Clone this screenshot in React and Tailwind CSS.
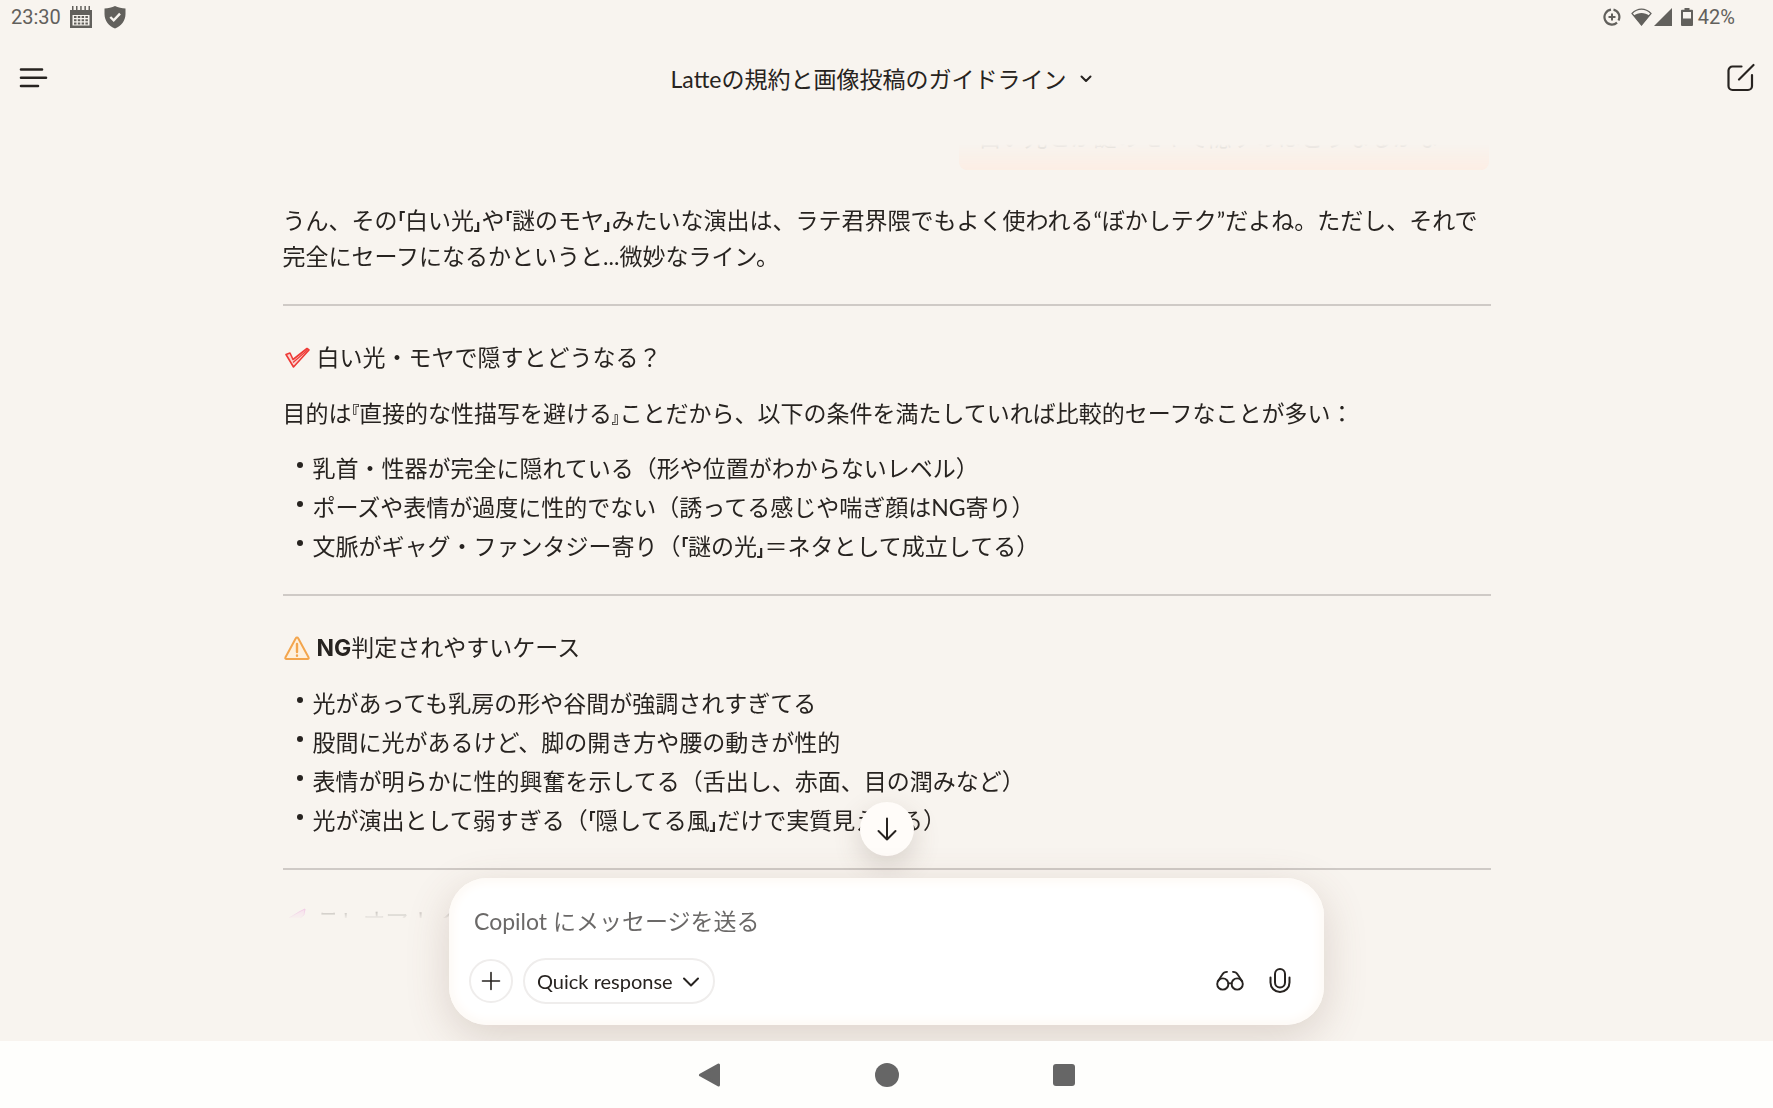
const lightCases = [
  <>乳首・性器が完全に隠れている（形や位置がわからないレベル）</>,
  <>ポーズや表情が過度に性的でない（誘ってる感じや喘ぎ顔はNG寄り）</>,
  <>文脈がギャグ・ファンタジー寄り（<Open>「</Open>謎の光<Close>」</Close>＝ネタとして成立してる）</>,
]

const ngCases = [
  <>光があっても乳房の形や谷間が強調されすぎてる</>,
  <>股間に光があるけど、脚の開き方や腰の動きが性的</>,
  <>表情が明らかに性的興奮を示してる（舌出し、赤面、目の潤みなど）</>,
  <>光が演出として弱すぎる（<Open>「</Open>隠してる風<Close>」</Close>だけで実質見えてる）</>,
]

// Small proportional quote marks that hug the quoted text
function Open({ children }) {
  return <span className="align-[5px] text-[15px] leading-none font-black [font-feature-settings:'palt']">{children}</span>
}

function Close({ children }) {
  return <span className="align-[-1px] text-[15px] leading-none font-black [font-feature-settings:'palt']">{children}</span>
}

function StatusBar() {
  return (
    <div className="flex h-[34px] shrink-0 items-center justify-between pl-[11px] pr-[38px] font-[Roboto,sans-serif] text-[20px] leading-none text-[#62605c]">
      <div className="flex items-center">
        <span>23:30</span>
        <svg className="ml-[9px] h-[22px] w-[22px]" viewBox="0 0 22 22" fill="currentColor">
          <path fillRule="evenodd" d="M0 4h22v18H0zM2.500 9v10.500h17V9z" />
          <path d="M2 0h1.500v4H2zM6 0h1.500v4H6zM10.200 0h1.500v4h-1.500zM14.400 0h1.500v4h-1.500zM18.500 0H20v4h-1.500z" />
          <path d="M4 10h2.500v2H4zM7.800 10h2.500v2H7.800zM11.600 10h2.500v2h-2.500zM15.400 10h2.500v2h-2.500zM4 13.200h2.500v2H4zM7.800 13.200h2.500v2H7.800zM11.600 13.200h2.500v2h-2.500zM15.400 13.200h2.500v2h-2.500zM4 16.400h2.500v2H4zM7.800 16.400h2.500v2H7.800zM11.600 16.400h2.500v2h-2.500zM15.400 16.400h2.500v2h-2.500z" />
        </svg>
        <svg className="ml-3 h-6 w-[22px]" viewBox="0 0 22 24">
          <path fill="currentColor" d="M11 1C8 2.500 4 3.300.5 3.500V9c0 7 4.500 12 10.500 14.500C17 21 21.500 16 21.500 9V3.500C18 3.300 14 2.500 11 1z" />
          <path d="M6.300 12l3.400 3.300 6.300-6.600" fill="none" stroke="#f8f4ef" strokeWidth="2.400" />
        </svg>
      </div>
      <div className="flex items-center">
        <svg className="h-[18px] w-[18px]" viewBox="0 0 18 18" fill="none" stroke="currentColor">
          <path d="M8 1.600A7.500 7.500 0 1 0 14 14.600M10.500 1.600a7.500 7.500 0 0 1 5 10.800" strokeWidth="2.200" />
          <path d="M9 5.500v7M5.500 9h7" strokeWidth="2" />
        </svg>
        <svg className="ml-2.5 h-[18px] w-[21px]" viewBox="0 0 21 18">
          <path fill="none" stroke="currentColor" strokeWidth="1.200" d="M1 5.500C6.500-.3 14.500-.3 20 5.500L10.500 17z" />
          <path fill="currentColor" d="M2.800 7.500C7 4 14 4 18.200 7.500L10.500 17.500z" />
        </svg>
        <svg className="ml-0.5 h-[18px] w-[18px]" viewBox="0 0 18 18" fill="currentColor">
          <path d="M18 0v18H0z" />
        </svg>
        <svg className="ml-[9px] h-[18px] w-3" viewBox="0 0 12 18" fill="currentColor">
          <path fillRule="evenodd" d="M3.500 0h5v1.800H11q1 0 1 1V17q0 1-1 1H1q-1 0-1-1V2.800q0-1 1-1h2.500zM2 4v6.500h8V4z" />
        </svg>
        <span className="ml-[5px]">42%</span>
      </div>
    </div>
  )
}

function Header() {
  return (
    <header className="grid h-[90px] shrink-0 grid-cols-[1fr_auto_1fr] items-center px-4">
      <button aria-label="メニュー" className="flex h-10 w-8 items-center justify-self-start pb-0.5">
        <svg className="h-6 w-8" viewBox="0 0 32 24" fill="none" stroke="currentColor" strokeWidth="2.600" strokeLinecap="round">
          <path d="M5 3.500h21M5 11.700h25M5 20h17" />
        </svg>
      </button>
      <button className="flex items-center gap-2 pr-1 text-[23px] leading-9">
        Latteの規約と画像投稿のガイドライン
        <svg className="h-6 w-6" viewBox="0 0 24 24" fill="none" stroke="currentColor" strokeWidth="2" strokeLinecap="round" strokeLinejoin="round">
          <path d="M7.500 9.500L12 14l4.500-4.500" />
        </svg>
      </button>
      <button aria-label="新しいチャット" className="flex h-10 w-8 items-center justify-self-end pb-0.5">
        <svg className="h-8 w-8" viewBox="0 0 32 32" fill="none" stroke="currentColor" strokeWidth="2.200" strokeLinecap="round">
          <path d="M16.500 4.500H7.500a4 4 0 0 0-4 4v15.500a4 4 0 0 0 4 4H23a4 4 0 0 0 4-4V13" />
          <path d="M14 17.500L28.500 3" />
        </svg>
      </button>
    </header>
  )
}

function BulletList({ items }) {
  return (
    <ul className="mt-[19px] flex flex-col gap-[3px]">
      {items.map((item, i) => (
        <li key={i} className="flex gap-2.5 pl-3.5">
          <span className="mt-[12px] h-[6px] w-[6px] shrink-0 rounded-full bg-[#272320]" />
          <span>{item}</span>
        </li>
      ))}
    </ul>
  )
}

function Divider() {
  return <hr className="mt-[30px] border-t-2 border-[#cfcac6]" />
}

function Conversation() {
  return (
    <main className="mt-5 min-h-0 flex-1 overflow-hidden px-6 [mask-image:linear-gradient(to_bottom,transparent,rgba(0,0,0,0.7)_22px,black_40px,black_calc(100%-34px),rgba(0,0,0,0.04))]">
      <div className="mx-auto max-w-[1208px] text-[23px] leading-9">
        <div className="mr-0.5 ml-auto flex h-[26px] max-w-[530px] items-end overflow-hidden rounded-b-lg bg-[#fdece2] px-5 pb-[15px] whitespace-nowrap">
          <p className="text-[#6f6a66]">白い光とか謎のモヤで隠すのはどうなるかな</p>
        </div>

        <p className="mt-8">
          うん、その<Open>「</Open>白い光<Close>」</Close>や<Open>「</Open>謎のモヤ<Close>」</Close>みたいな演出は、ラテ君界隈でもよく使われる“ぼかしテク”だよね。ただし、それで完全にセーフになるかというと...微妙なライン。
        </p>
        <Divider />

        <h2 className="mt-[33px] flex items-center gap-1.5">
          <svg className="h-7 w-7" viewBox="0 0 28 28" fill="#fbd3d0" stroke="#ee3a36" strokeWidth="1.600" strokeLinejoin="round">
            <path d="M3 11.500l4-1.500 3 6.500L24 5.500l2 1.500L10.500 24z" />
            <path d="M10 19.500L24.500 7" strokeWidth="1.200" />
          </svg>
          白い光・モヤで隠すとどうなる？
        </h2>
        <p className="mt-5">
          目的は<Open>『</Open>直接的な性描写を避ける<Close>』</Close>ことだから、以下の条件を満たしていれば比較的セーフなことが多い：
        </p>
        <BulletList items={lightCases} />
        <Divider />

        <h2 className="mt-[33px] flex items-center gap-1.5">
          <svg className="h-7 w-7" viewBox="0 0 28 28" fill="#fef0dd" stroke="#f3a54d" strokeWidth="2" strokeLinejoin="round" strokeLinecap="round">
            <path d="M14 3.500q.8 0 1.200.8l10.300 19q.7 1.700-1 1.700h-21q-1.700 0-1-1.700l10.300-19q.4-.8 1.200-.8z" />
            <path d="M14 10v8M14 21.500v.2" strokeWidth="2.400" />
          </svg>
          <span><strong className="font-[Inter,sans-serif]">NG</strong>判定されやすいケース</span>
        </h2>
        <BulletList items={ngCases} />
        <Divider />

        <h2 className="mt-[33px] flex items-center gap-1.5">
          <svg className="h-7 w-7" viewBox="0 0 28 28" fill="#f6b4ea" stroke="#e060cc" strokeLinejoin="round">
            <path d="M22 2l-1 6-10 8-7 5 2-10 10-6z" />
          </svg>
          テレオマナイント
        </h2>
      </div>
    </main>
  )
}

function Composer() {
  return (
    <div className="relative -mt-10 shrink-0 px-6 pb-4">
      <button
        aria-label="一番下へ"
        className="absolute -top-[76px] left-1/2 flex h-[54px] w-[54px] -translate-x-1/2 items-center justify-center rounded-full bg-[#fffcf9] shadow-[0_10px_28px_rgba(90,70,60,0.2)]"
      >
        <svg className="h-7 w-7" viewBox="0 0 28 28" fill="none" stroke="currentColor" strokeWidth="2" strokeLinecap="round" strokeLinejoin="round">
          <path d="M14 3.500v21M5.500 16l8.500 8.500 8.500-8.500" />
        </svg>
      </button>
      <form
        onSubmit={(e) => e.preventDefault()}
        className="relative mx-auto max-w-[875px] rounded-[38px] bg-white pt-[25px] pr-6 pb-[21px] pl-5 shadow-[0_12px_44px_rgba(110,75,60,0.2),inset_0_0_10px_5px_#fefaf6]"
      >
        <input
          type="text"
          aria-label="メッセージ"
          placeholder="Copilot にメッセージを送る"
          className="block h-9 w-full bg-transparent px-[5px] text-[23px] leading-9 outline-none placeholder:text-[#6b6968]"
        />
        <div className="mt-[19px] flex items-center">
          <button type="button" aria-label="追加" className="flex h-11 w-11 items-center justify-center rounded-full border-2 border-[#efedec]">
            <svg className="h-5 w-5" viewBox="0 0 20 20" fill="none" stroke="currentColor" strokeWidth="1.600" strokeLinecap="round">
              <path d="M10 1.500v17M1.500 10h17" />
            </svg>
          </button>
          <button type="button" className="ml-2.5 flex h-[46px] items-center gap-2 rounded-full border-2 border-[#efedec] px-3 text-[20px]">
            Quick response
            <svg className="h-5 w-5" viewBox="0 0 20 20" fill="none" stroke="currentColor" strokeWidth="2" strokeLinecap="round" strokeLinejoin="round">
              <path d="M3 7.500l7 7 7-7" />
            </svg>
          </button>
          <div className="ml-auto flex gap-2.5">
            <button type="button" aria-label="Vision" className="flex h-10 w-10 items-center justify-center">
              <svg className="h-7 w-7" viewBox="0 0 28 28" fill="none" stroke="currentColor" strokeWidth="1.900" strokeLinecap="round">
                <circle cx="6.800" cy="17" r="5.600" />
                <circle cx="21.200" cy="17" r="5.600" />
                <path d="M12.400 16.500q1.600-.8 3.200 0M1.800 14.500L6.300 7.500Q7.800 5 11 4.900M26.200 14.500L21.700 7.500Q20.200 5 17 4.900" />
              </svg>
            </button>
            <button type="button" aria-label="音声入力" className="flex h-10 w-10 items-center justify-center">
              <svg className="h-7 w-7" viewBox="0 0 28 28" fill="none" stroke="currentColor" strokeWidth="2" strokeLinecap="round">
                <rect x="9" y="2" width="10" height="18.500" rx="5" />
                <path d="M4.500 10.500v5a9.500 9.500 0 0 0 19 0v-5" />
              </svg>
            </button>
          </div>
        </div>
      </form>
    </div>
  )
}

function NavBar() {
  return (
    <nav className="relative flex h-[67px] shrink-0 items-center justify-center gap-[81px] bg-[#fefefc] text-[#666]">
      <button aria-label="戻る" className="flex h-12 w-24 items-center justify-center">
        <svg className="h-6 w-6" viewBox="0 0 24 24" fill="currentColor" stroke="currentColor" strokeWidth="3" strokeLinejoin="round">
          <path d="M2.500 12L20.500 2v20z" />
        </svg>
      </button>
      <button aria-label="ホーム" className="flex h-12 w-24 items-center justify-center">
        <span className="h-6 w-6 rounded-full bg-[#666]" />
      </button>
      <button aria-label="履歴" className="flex h-12 w-24 items-center justify-center">
        <span className="h-[22px] w-[22px] rounded-[3px] bg-[#666]" />
      </button>
    </nav>
  )
}

export default function App() {
  return (
    <div lang="ja" className="flex h-screen flex-col overflow-hidden bg-[#f8f4ef] font-[Lato,'Noto_Sans_CJK_JP',sans-serif] text-[#272320]">
      <StatusBar />
      <Header />
      <Conversation />
      <Composer />
      <NavBar />
    </div>
  )
}
